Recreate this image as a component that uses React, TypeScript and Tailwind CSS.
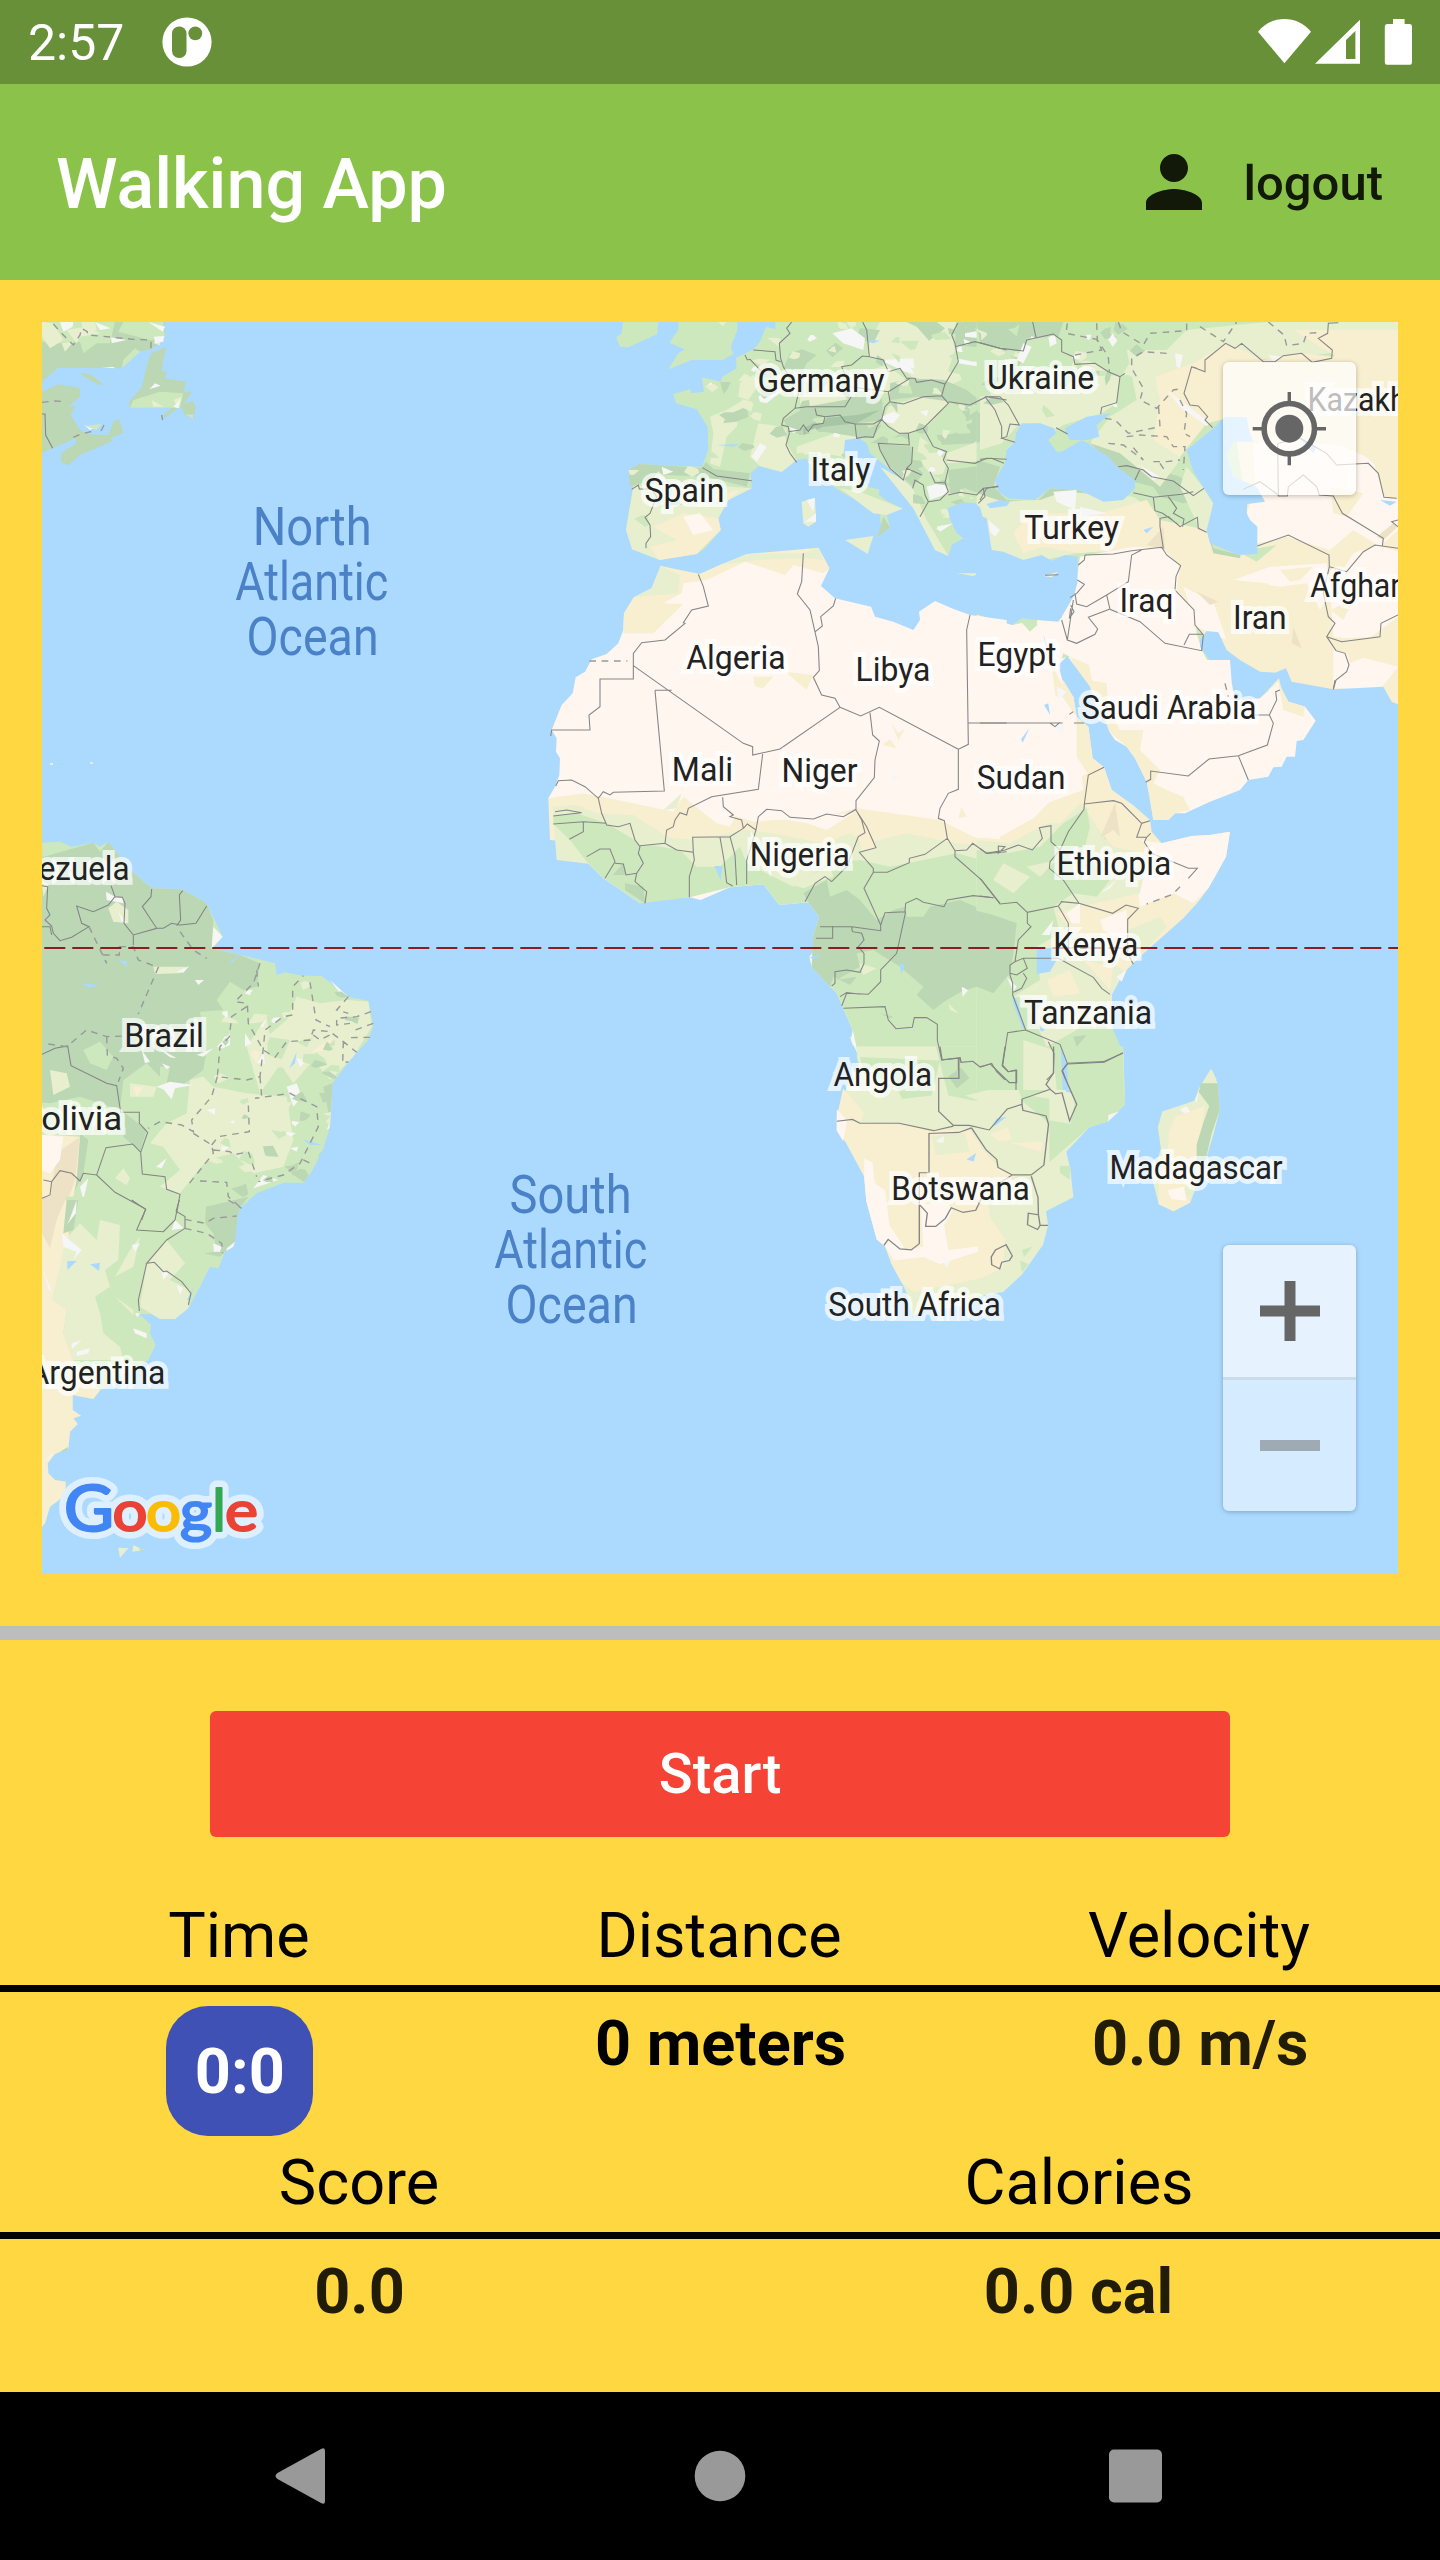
import React from "react";

type Shape = [fill: string, d: string];

const WATER = "#acdaff";
const GREEN = "#cee8bd";
const DARK = "#bbd7b4";
const LIME = "#e8efcf";
const SAND = "#f8eed0";
const DESERT = "#fff6ef";
const WHITE = "#f6f6f6";
const TAN = "#eee2c6";

/** Each tile of the map has its own drawing grid. */
const T = {
  nw: "translate(0 300) scale(.33333)",
  eu: "translate(540 300) scale(.33333)",
  me: "translate(980 300) scale(.33333)",
  wa: "translate(540 680) scale(.33333)",
  ea: "translate(980 680) scale(.33333)",
  br: "translate(0 820) scale(.33333)",
  ar: "translate(0 1200) scale(.33333)",
  sa: "translate(780 1050) scale(.42088 .35075)",
};

const EUROPE =
  "M708 0 706 88 678 80 660 125 640 148 600 168 588 175 590 205 545 232 543 245 486 232 492 275 455 280 450 268 400 282 408 310 470 328 503 380 505 450 486 500 395 498 300 492 298 510 265 510 280 560 258 690 276 695 276 748 325 745 358 780 410 762 470 762 495 745 542 690 535 655 565 600 635 565 632 520 655 498 725 517 770 480 800 475 820 520 860 545 910 580 965 608 1020 640 1022 670 1030 690 1012 712 1050 682 1040 645 1048 620 1088 626 1040 602 1017 585 1018 568 985 562 960 520 930 480 910 455 912 415 945 405 980 430 990 460 1040 500 1090 540 1118 565 1120 625 1160 680 1180 700 1185 750 1225 768 1235 735 1270 715 1250 700 1230 660 1222 625 1270 607 1315 610 1335 600 1380 600 1400 0Z";

const europe: Shape[] = [
  [GREEN, "M250 60 355 60 352 102 265 142 240 140 229 112 245 100ZM415 60 592 60 592 90 572 140 580 162 548 180 455 180 385 208 415 160 435 148 388 128 415 90Z"],
  [GREEN, EUROPE],
  [LIME, "M535 66 560 66 548 78ZM1020 66 1250 66 1235 100 1245 150 1215 240 1120 235 1095 210 1040 180 985 170 990 120ZM930 230 1040 195 1100 240 1050 280 930 270ZM1045 320 1140 290 1205 290 1225 310 1190 350 1150 390 1105 400 1080 400 1030 360ZM600 250 640 225 660 250 625 300 595 290ZM510 350 560 330 610 300 590 380 560 410 540 500 510 490 520 400ZM655 370 725 380 745 440 770 480 725 515 660 498 630 470ZM770 440 910 390 980 410 915 420 910 470 820 455 770 460ZM780 290 870 250 950 280 920 320 780 320ZM900 565 960 575 1088 626 1040 645 1000 640ZM1020 500 1090 540 1118 565 1160 660 1225 768 1185 750 1120 625ZM1220 460 1380 400 1390 480 1220 490ZM1140 410 1180 440 1220 490 1200 545 1170 520 1130 470Z"],
  [LIME, "M280 560 420 540 570 560 635 565 565 600 535 655 542 690 470 762 358 780 276 748 258 690Z"],
  [DARK, "M298 492 500 505 630 520 620 560 500 530 380 525 270 560 265 510ZM560 345 620 320 625 350 590 365 550 370ZM750 160 785 148 830 165 800 190 790 210 730 205ZM960 85 1020 90 1000 130 950 115ZM730 360 800 320 1025 280 1030 360 950 370 950 410 850 395 780 405 745 385ZM1050 250 1110 235 1215 240 1280 270 1330 310 1345 390 1300 430 1200 435 1190 405 1290 400 1300 340 1230 305 1130 290 1050 300ZM1250 66 1400 60 1400 150 1245 135ZM1010 430 1115 440 1115 490 1150 520 1120 560 1050 500ZM1225 510 1380 490 1370 560 1320 585 1230 580ZM945 372 1025 375 1000 410 950 415ZM1012 712 1030 650 1050 682ZM1100 66 1190 66 1215 85 1170 125 1130 80Z"],
  ["#a7c6a6", "M790 385 850 355 950 345 1020 330 950 370 850 380 790 405Z"],
  [WHITE, "M877 100 935 85 975 115 970 150 910 130ZM1020 180 1120 175 1125 222 1095 215 1040 190ZM655 290 690 262 730 270 680 310 660 305ZM1025 350 1060 335 1080 345 1060 370 1030 365ZM1275 100 1330 90 1320 115 1275 110ZM1250 175 1300 185 1340 180 1320 200 1255 190ZM745 380 775 390 760 400ZM365 500 400 515 370 525ZM450 670 480 665 475 712 460 710ZM1160 560 1210 545 1225 580 1170 600ZM1190 680 1240 670 1200 695ZM1140 335 1165 330 1160 350ZM660 430 680 440 650 485 635 470Z"],
  [SAND, "M340 680 430 640 535 655 542 690 470 762 358 780 330 740 410 720ZM560 580 600 570 560 605ZM1330 565 1380 560 1360 605 1330 590Z"],
  [DESERT, "M430 650 480 640 520 690 460 705Z"],
  [WATER, "M530 435 600 432 580 440ZM980 118 1020 122 1000 130Z"],
  [LIME, "M785 605 825 594 828 665 805 680 790 670ZM915 720 1000 708 983 762ZM1250 820 1320 820 1300 828Z"],
  [WHITE, "M800 600 825 594 820 635ZM795 665 828 640 828 665Z"],
];

const mideast: Shape[] = [
  [GREEN, "M-10 0H1254V1225H-10Z"],
  [DARK, "M-10 66 250 66 235 110 140 115 130 155 0 130ZM-10 330 25 370 10 420 -10 430ZM325 425 420 440 500 500 600 530 670 600 610 610 540 590 520 560 460 545ZM-10 480 60 500 40 560 80 600 170 605 210 565 300 570 370 605 430 598 480 575 360 630 100 625 -10 575ZM905 66 975 66 935 120ZM680 690 700 745 780 765 830 765 820 790 690 770Z"],
  [LIME, "M0 290 200 270 320 230 420 225 410 310 365 340 250 375 225 390 180 370 110 380 65 430 0 450ZM440 150 560 150 620 90 860 66 1254 66 1254 130 900 180 720 170 620 250 600 480 540 560 420 460 330 430 390 350 470 300ZM-10 580 70 605 180 600 250 575 460 590 530 640 440 760 310 755 180 782 130 780 35 750 -10 640ZM620 500 700 600 690 700 660 690 600 560Z"],
  [SAND, "M525 230 640 190 740 130 850 180 970 160 1060 170 1254 90 1254 1225 930 1225 660 1000 590 870 550 750 440 745 300 760 190 740 130 760 100 700 150 640 360 640 500 600 540 660 680 690 700 760 780 775 800 640 760 350 680 370 600 470 520 420 540 300Z"],
  [DESERT, "M825 570 820 430 930 420 1090 440 1180 480 1210 590 1254 600 1254 690 1200 740 1120 690 1050 750 920 710 832 730 800 640ZM870 800 1040 790 1050 880 1020 930 980 850 900 860 760 840ZM1050 870 1120 760 1190 735 1254 755 1254 950 1160 1020 1060 1010ZM300 770 460 740 550 745 600 800 590 870 645 930 650 1000 665 1050 720 1150 750 1225 300 1225 262 1070 245 950 285 880ZM1060 1050 1254 1100 1200 1170 1060 1165ZM610 860 700 905 740 1020 650 980Z"],
  [DESERT, "M-10 945 97 975 170 960 245 955 263 1025 325 1160 345 1225 -10 1225Z"],
  [SAND, "M690 760 760 800 700 880 600 840ZM270 1070 340 1100 400 1170 380 1225 330 1200ZM1050 560 1150 580 1100 650 1060 640ZM940 90 1254 90 1254 240 1130 240 1100 190ZM215 1095 250 1160 240 1225 225 1180ZM1105 420 1210 450 1254 520 1254 590 1210 590 1190 500Z"],
  [SAND, "M760 840 860 850 900 880 830 900ZM900 810 1000 800 960 840 930 845ZM740 920 760 980 720 960ZM1090 1015 1200 1010 1180 1060 1110 1090ZM1050 930 1120 900 1090 960Z"],
  [TAN, "M500 735 550 680 555 750ZM650 875 715 905 690 915ZM940 980 965 1045 935 1030ZM1190 710 1240 670 1254 680 1210 720Z"],
  [GREEN, "M118 960 170 952 172 975 150 995ZM250 1060 270 1070 245 1075ZM620 450 690 380 720 370 650 430ZM775 755 890 735 830 785Z"],
  [WHITE, "M205 110 225 105 230 130 210 140ZM585 160 608 165 600 205 590 200ZM560 270 600 300 690 370 680 378 600 320ZM220 575 290 570 285 630 230 605ZM385 120 398 100 412 122 398 140ZM25 660 60 690 45 710 30 695ZM130 130 155 140 130 190 110 180ZM865 165 910 170 880 185ZM80 450 105 425 100 450ZM300 620 380 640 300 650ZM480 495 540 530 520 540Z"],
  [WATER, "M45 540 75 490 80 450 105 425 108 400 125 370 180 370 222 385 228 400 205 420 230 455 245 455 305 420 325 430 345 445 385 470 415 505 465 540 465 565 430 600 370 605 300 570 210 565 165 600 85 595 55 575ZM255 385 320 350 392 340 350 375 358 410 320 420 270 420 262 405ZM20 612 60 600 90 605 80 618 30 625Z"],
  [WATER, "M700 385 620 450 640 515 700 610 680 690 690 730 775 765 832 762 832 680 810 660 800 640 802 612 855 605 830 560 760 530 740 465 760 425 820 425 810 400 800 352 735 350Z"],
  [WATER, "M-12 612 0 622 8 650 20 655 35 750 70 755 130 780 185 765 215 782 255 765 293 770 292 850 280 890 245 950 235 965 170 960 125 955 97 975 -12 942Z"],
  [WATER, "M235 1095 262 1068 330 1160 350 1225 270 1225ZM190 1005 215 1070 200 1050ZM490 690 520 680 500 700ZM1200 600 1250 605 1230 617ZM960 410 1010 440 1000 460 975 435Z"],
  [WATER, "M660 1020 680 993 715 997 740 1050 780 1080 840 1115 885 1118 918 1105 935 1145 1060 1168 1210 1160 1235 1205 1260 1215 1260 1260 1000 1260 975 1220 925 1205 905 1170 897 1135 840 1195 780 1225 765 1210 755 1150 740 1130 718 1150 718 1120 660 1040Z"],
  [SAND, "M190 828 235 815 215 832Z"],
];

const westAfrica: Shape[] = [
  [DESERT, "M362 -342 335 -275 282 -248 252 -200 250 -150 235 -110 200 -78 155 -62 135 -25 107 -8 98 40 65 75 35 150 50 175 48 215 60 235 58 285 45 320 25 355 38 380 40 432 75 452 90 480 135 510 140 545 190 595 300 670 380 650 450 652 482 660 570 622 670 613 718 675 805 667 838 710 820 765 820 815 808 830 815 860 890 940 938 1050 933 1080 955 1125 965 1230 1400 1230 1400 -180 1290 -195 1235 -215 1185 -237 1137 -205 1140 -180 1120 -150 1060 -175 1005 -190 993 -220 885 -245 843 -282 868 -335 835 -397 790 -380 625 -378 540 -345 480 -318 400 -322Z"],
  [SAND, "M362 -342 480 -318 620 -378 835 -397 868 -335 850 -320 760 -345 735 -315 615 -355 500 -300 430 -290 425 -260 370 -230 430 -228 340 -140 250 -140 252 -200 282 -248 340 -265Z"],
  [LIME, "M362 -342 420 -315 415 -260 282 -248 335 -275ZM540 -345 625 -378 790 -380 835 -397 850 -360 800 -365 650 -360Z"],
  [SAND, "M25 355 130 340 280 370 400 395 430 350 560 400 640 425 850 410 950 385 1200 420 1300 470 1400 480 1400 620 30 480ZM640 -10 700 -10 670 25 645 20ZM735 -25 820 -15 800 30ZM1055 130 1075 160 1095 145 1075 182ZM1028 195 1050 178 1070 205ZM1265 380 1280 410 1255 415Z"],
  [DESERT, "M430 350 560 350 590 400 570 440 530 430ZM690 410 940 400 860 450 800 430Z"],
  [LIME, "M38 380 110 375 170 400 280 405 380 470 460 480 620 450 700 460 850 490 930 460 980 490 1100 460 1250 490 1400 500 1400 700 50 540ZM370 390 425 340 410 385Z"],
  [GREEN, "M40 405 110 400 200 430 300 490 420 510 470 560 540 560 600 500 620 550 760 620 870 550 960 540 1050 560 1250 520 1400 560 1400 1230 965 1230 955 1125 938 1050 890 940 815 860 820 765 838 710 805 667 718 675 670 613 570 622 450 652 300 670 190 595 140 545 90 480 40 432Z"],
  [LIME, "M270 430 340 440 380 490 300 500ZM455 475 540 475 530 555 470 530ZM760 615 870 555 880 590 790 625ZM955 850 1010 865 970 885ZM1225 970 1255 1000 1230 990ZM950 1125 1000 1150 1180 1140 1220 1170 1200 1230 970 1230Z"],
  [SAND, "M955 470 1000 465 1010 505 965 510Z"],
  [DARK, "M790 640 860 600 870 650 920 630 960 660 1010 720 1060 690 1095 680 1100 710 1150 710 1170 680 1260 660 1330 690 1400 680 1400 940 1350 940 1310 910 1220 960 1180 990 1130 945 1150 920 1080 860 1000 810 950 820 960 860 890 900 950 890 930 915 880 890 870 920 815 860 820 765 838 710 805 667ZM218 585 250 550 260 585ZM255 610 310 620 315 670 255 630ZM1020 1000 1060 1010 1050 1015Z"],
  [WHITE, "M1075 555 1200 530 1110 548ZM1265 920 1285 930 1268 950ZM1050 290 1085 288 1060 300ZM930 1070 942 1075 940 1100Z"],
  [WATER, "M523 558 547 558 542 600ZM1085 740 1098 672 1092 715ZM1078 852 1095 852 1085 882ZM808 832 848 822 820 838Z"],
];

const eastAfrica: Shape[] = [
  [DESERT, "M60 50 280 50 290 110 325 140 338 235 372 262 395 330 465 380 400 450 60 470Z"],
  [SAND, "M60 470 110 425 160 415 205 370 300 290 372 262 395 330 465 380 510 420 515 455 545 490 635 468 690 465 750 455 738 530 685 625 655 665 610 715 485 825 430 880 395 945 397 1070 430 1120 432 1230 60 1230Z"],
  [DESERT, "M-10 50 280 50 285 105 300 240 310 330 200 370 160 415 60 470 -10 475ZM545 490 635 468 690 465 750 455 738 530 685 625 640 670 580 640 480 680 470 600 530 560 510 500 480 480Z"],
  [SAND, "M250 0 280 50 290 110 325 140 338 235 372 262 330 290 290 230 290 110 240 40Z"],
  [LIME, "M-10 480 90 490 200 430 240 430 300 370 350 400 400 470 500 540 480 640 300 680 230 700 320 800 430 870 395 945 397 1070 430 1120 -10 1230ZM370 780 540 710 560 740 460 850Z"],
  [GREEN, "M-10 510 80 520 180 500 250 430 320 385 330 440 310 520 390 600 350 650 280 640 220 680 240 760 170 800 180 900 100 950 180 960 250 1040 395 1040 430 1120 432 1230 -10 1230Z"],
  [LIME, "M70 550 150 590 100 640 40 600ZM150 990 250 980 290 1050 200 1100ZM130 1080 220 1110 230 1230 130 1230ZM140 560 230 540 180 590Z"],
  [DARK, "M-40 685 40 705 110 730 100 820 90 880 40 940 -10 920 -40 930ZM280 1070 320 1065 290 1100Z"],
  [TAN, "M405 370 420 470 370 480Z"],
  [SAND, "M320 390 400 380 480 440 490 520 400 500 350 440ZM200 900 270 870 300 940 220 950ZM310 840 400 860 390 930ZM250 690 440 690 440 820 330 820Z"],
  [TAN, "M405 370 420 470 400 450 360 475Z"],
  [DESERT, "M260 700 300 670 300 730 275 730ZM360 720 440 690 440 790 370 750Z"],
  [WHITE, "M360 640 410 600 390 625ZM185 765 220 720 210 765ZM230 20 260 35 235 60ZM225 140 255 130 245 170ZM80 890 110 920 100 935ZM410 890 440 870 425 905Z"],
  [DESERT, "M325 -60 750 -60 755 5 765 70 780 60 840 55 895 5 905 30 925 65 975 80 1007 122 970 180 950 183 945 230 920 230 905 260 880 262 865 290 805 300 780 330 690 365 615 400 585 400 565 420 520 420 510 350 500 305 465 235 440 200 405 180 388 155 385 130 345 60Z"],
  [SAND, "M385 80 420 150 490 150 480 210 540 270 520 310 560 330 610 350 630 390 585 400 565 420 520 420 500 305 465 235 440 200 388 155 330 0 380 10ZM895 5 925 65 975 80 970 110 910 90Z"],
  [WATER, "M170 808 240 800 230 840 210 875 170 882ZM95 940 110 960 135 1045 128 1045 100 970ZM242 1100 262 1150 265 1230 248 1230 245 1160ZM192 75 205 70 210 105ZM123 178 148 145 128 188ZM170 1035 195 1050 185 1055Z"],
  [LIME, "M695 1168 710 1200 680 1200Z"],
];

const southAfrica: Shape[] = [
  [LIME, "M180 -10 188 40 160 100 135 190 135 230 155 260 200 360 205 430 230 540 250 560 265 610 290 665 300 690 315 760 340 740 410 735 480 700 530 690 575 640 625 555 637 500 632 460 697 420 690 340 680 290 735 220 780 203 820 155 815 -10Z"],
  [GREEN, "M190 20 380 30 360 130 290 140 270 90 200 70ZM370 -10 815 -10 820 155 780 203 735 220 640 320 640 210 560 130 460 145 400 130ZM665 330 690 330 688 370 665 350ZM245 265 310 245 300 275 255 285ZM575 570 600 560 580 590ZM570 600 590 610 575 635Z"],
  [DARK, "M400 75 430 50 450 80 420 110Z"],
  [LIME, "M440 130 560 95 575 140 520 165ZM640 130 700 150 690 210 640 200ZM590 130 640 115 640 60 680 60 700 150Z"],
  [SAND, "M150 110 200 180 190 205 280 212 375 228 450 225 480 280 520 335 560 360 490 400 500 480 535 540 530 620 480 650 320 690 290 665 265 610 250 560 230 540 205 430 200 360 155 260 135 230 135 190ZM500 240 540 220 550 255 520 260ZM550 265 625 260 620 290Z"],
  [DESERT, "M200 310 220 320 225 380 250 400 260 500 300 570 340 560 335 440 400 440 410 460 390 500 400 570 470 560 470 575 380 610 340 590 270 600 250 560 230 540 205 430 200 360ZM135 170 160 200 150 260 135 230Z"],
  [LIME, "M360 245 440 235 450 290 370 300Z"],
  [WHITE, "M480 100 497 88 485 105ZM780 185 805 175 780 203ZM370 260 390 245 388 265ZM560 60 575 35 570 65ZM385 590 405 600 395 620Z"],
  [WATER, "M502 220 515 195 538 190 512 215ZM443 312 466 294 460 318ZM665 -10 680 40 692 122 680 120 668 60Z"],
  [LIME, "M1023 55 1040 95 1045 170 1030 240 1010 320 975 435 935 460 900 440 885 370 905 280 898 220 908 175 985 145 995 110Z"],
  [SAND, "M940 190 1010 160 1000 240 985 330 960 400 975 435 935 460 900 440 900 380 920 300 925 230Z"],
  [DARK, "M1000 95 1040 95 1045 170 1025 240 1010 320 990 320 990 270 1005 210 1020 160 995 120Z"],
  [DESERT, "M920 400 960 390 965 430 930 425Z"],
  [WHITE, "M985 145 995 120 990 148ZM950 170 965 160 975 175 960 180Z"],
];

const brazil: Shape[] = [
  [GREEN, "M60 72 180 65 215 80 280 68 300 80 325 65 390 150 455 205 545 208 620 250 668 350 640 385 720 405 825 430 830 465 855 457 905 467 965 468 1045 530 1105 543 1120 615 1105 660 1050 720 998 790 990 920 970 985 932 1060 910 1088 850 1088 770 1120 720 1165 700 1230 60 1230Z"],
  [DARK, "M60 130 280 68 300 95 325 65 390 150 455 205 545 208 620 250 640 300 635 385 720 405 780 430 770 500 730 510 690 485 650 540 670 570 600 575 620 690 610 750 540 800 500 790 440 730 370 780 360 870 240 830 150 850 60 840ZM375 880 440 930 420 995 370 950ZM240 940 265 960 250 1060 200 1160 230 1060ZM970 800 998 790 990 900ZM630 1180 700 1130 720 1165 700 1230 620 1230Z"],
  [GREEN, "M250 690 300 665 340 710 320 750 270 730ZM480 740 510 740 500 790 480 780ZM650 600 700 580 700 690 650 660Z"],
  [LIME, "M325 265 350 245 385 270 385 310 340 305ZM460 440 560 440 540 460 465 462ZM500 910 560 880 570 780 610 770 640 800 740 820 860 830 880 960 850 1040 760 1060 700 1000 620 1020 540 1120 480 1100 540 1050 490 980 450 970ZM890 530 960 550 1040 540 1105 545 1115 620 1060 710 990 780 940 720 880 790 840 730 870 660 800 650 860 600ZM150 750 200 760 210 800 160 825ZM345 1075 370 1045 390 1075 380 1095ZM390 790 470 800 460 830 390 830ZM740 680 800 590 810 650 790 700 850 720 780 820ZM125 180 145 195 130 230Z"],
  [SAND, "M60 940 240 950 230 1080 200 1230 60 1230ZM750 700 790 670 770 730ZM930 700 1000 650 980 690ZM400 800 430 800 410 830Z"],
  [TAN, "M170 1000 240 950 225 1080 190 1180 150 1140Z"],
  [DESERT, "M60 940 190 950 180 1020 150 1060 60 1030Z"],
  [WHITE, "M318 215 345 230 370 235 370 250 320 240ZM355 275 380 310 365 305ZM640 320 668 350 635 385ZM585 480 612 480 595 495ZM530 455 568 438 550 458ZM470 680 530 715 510 712ZM425 690 450 725 435 730ZM470 800 510 785 580 795 525 805 515 838 490 808ZM485 730 510 740 500 748ZM590 705 640 685 610 710ZM650 680 690 640 690 675 655 690ZM735 640 755 670 735 680ZM890 715 920 720 900 742ZM860 800 890 790 905 830 880 860ZM990 480 1045 530 1020 520ZM980 930 990 905 988 925ZM760 1105 790 1065 835 1080ZM870 985 895 980 890 995ZM468 1040 500 1015 485 1045ZM620 870 645 865 645 885ZM770 730 790 700 795 730ZM240 1100 265 1075 250 1140ZM780 620 800 595 790 620ZM690 905 705 900 700 912Z"],
  [WATER, "M355 420 382 425 380 440ZM243 490 295 495 270 503ZM685 430 725 400 700 425ZM868 745 890 695 885 730ZM908 958 965 975 930 975Z"],
];

const argentina: Shape[] = [
  [GREEN, "M60 -10 745 -10 715 30 705 60 705 125 675 155 655 205 630 200 600 260 565 325 525 357 480 357 455 342 418 342 453 375 450 400 467 435 445 480 410 500 303 570 280 597 218 585 218 630 243 647 220 655 233 672 210 695 205 745 165 762 143 790 145 820 165 840 197 845 197 885 150 920 135 970 126 980 60 980Z"],
  [SAND, "M60 -10 200 0 210 160 180 200 200 330 190 400 220 480 300 570 280 597 218 585 218 630 243 647 220 655 233 672 210 695 205 745 165 762 143 790 145 820 165 840 197 845 197 885 150 920 135 970 126 980 60 980Z"],
  [LIME, "M195 120 240 70 290 120 300 60 360 75 355 180 315 210 330 260 285 290 300 340 310 400 360 440 370 480 220 480 190 400 200 330 155 300 180 200ZM440 190 500 120 555 190 510 240 570 270 565 325 525 357 480 357 420 320ZM345 230 390 150 420 110 400 200ZM345 290 400 330 400 345Z"],
  [DARK, "M200 0 235 0 220 90 190 100ZM618 20 745 -10 715 30 705 125 675 155 660 170 612 160 650 155 640 100 615 70Z"],
  [TAN, "M126 -10 200 -10 170 60 150 145 126 100Z"],
  [WHITE, "M208 60 230 0 228 40 200 75ZM185 100 245 150 220 180 230 155 190 140ZM400 385 440 400 440 415 405 400ZM230 455 270 445 265 460 230 468ZM640 130 665 140 660 155 642 155ZM680 145 705 125 700 140 680 153ZM525 60 550 85 515 90ZM485 215 508 220 490 240ZM530 255 550 265 540 285ZM128 200 155 275 145 265ZM395 135 420 130 405 155ZM215 430 245 420 215 448ZM135 780 162 755 150 775ZM405 340 420 340 412 352Z"],
  [WATER, "M202 183 230 183 202 210ZM270 193 300 188 297 213ZM580 265 560 300 570 300Z"],
  [LIME, "M355 1043 385 1045 360 1073ZM400 1035 432 1050 397 1055Z"],
  [DARK, "M180 755 205 740 200 752ZM415 1040 433 1053 425 1055Z"],
];

const canada: Shape[] = [
  [DARK, "M60 0 495 0 495 115 455 148 410 155 365 205 175 203 126 245 60 260ZM126 275 175 253 240 265 240 290 205 320 228 318 212 345 240 390 270 403 325 405 340 365 357 357 370 398 330 415 340 422 240 465 205 496 183 487 183 460 228 430 228 415 126 458ZM237 220 270 222 313 255 290 253ZM455 160 498 140 485 210 502 218 492 235 558 245 550 275 575 275 553 310 578 303 588 320 580 355 555 345 540 318 495 355 490 345 515 323 390 323 387 305 425 262 445 180Z"],
  [GREEN, "M126 66 345 66 330 130 290 130 250 160 240 125 180 130 126 125ZM370 66 490 66 495 115 450 120 355 95ZM370 180 405 145 420 155 365 205ZM400 300 480 275 550 280 540 323 390 323Z"],
  [LIME, "M126 66 160 70 190 120 150 145 126 110ZM200 90 260 80 300 100 240 110 230 130ZM455 300 490 320 460 320ZM520 300 545 290 535 323ZM245 66 285 66 290 90 250 100ZM185 130 220 125 195 155ZM460 130 480 110 480 135Z"],
  [WHITE, "M180 66 220 66 218 80 190 95ZM285 66 332 85 300 90ZM333 112 380 120 335 130ZM445 66 495 80 488 95ZM462 110 492 108 490 125 465 130ZM448 268 465 250 482 257ZM520 320 542 297 535 325ZM252 375 280 385 270 390ZM305 201 345 201 340 205Z"],
  [GREEN, "M255 378 305 372 290 390ZM555 343 580 345 578 355Z"],
];

type Line = [transform: string, solid: string, dashed: string];

const borders: Line[] = [
  [T.eu,
    "M755 66 740 85 750 100 718 130 722 175 730 200 775 280 765 325 730 355 725 375 745 380 748 400 738 435 750 460 770 487M640 150 705 155 708 180 722 185M615 165 622 180 630 178 675 225M968 66 980 90 988 170 1030 180 1045 215 1080 205 1100 235 1125 235 1130 247 1175 240 1215 252 1255 185 1245 130 1235 105 1253 70M988 170 967 168 935 195 905 200 930 260 1045 275 1110 235M1045 275 1050 305 1090 312 1150 290 1205 287 1215 252M940 280 915 320 800 320 765 325M825 325 830 345 855 350 900 345 915 365 945 372 1000 372 1025 358 1035 320 1050 305M745 395 780 390 790 375 805 395 820 375 850 370 855 350M945 372 950 415 975 410 1000 412 1012 378 1025 358 1045 380 1078 400 1105 400 1150 385 1190 345 1225 310 1205 287M1225 305 1290 315 1340 290 1400 300M1105 400 1108 435 1015 430 1020 450 1050 505 1090 540 1100 505 1115 490 1118 440M1150 385 1180 440 1220 455 1210 480 1225 505 1215 548 1225 575 1200 600 1165 605 1140 650M1220 480 1305 490 1340 475 1400 478M1118 565 1125 540 1150 555 1155 585 1165 605M1100 505 1145 525M1170 515 1185 548 1215 548M1225 585 1260 577 1310 585 1330 565 1375 560M1330 565 1335 590 1315 610M1245 140 1305 125 1400 150M487 503 530 528 635 542M275 568 295 555 298 567 335 567 350 590 330 640 315 652 330 675 332 710 318 730 318 745",
    "M148 1083H262"],
  [T.me,
    "M0 128 60 145 130 153 140 120 220 102 245 120 245 155 280 170 285 193 345 190 385 215 420 230 410 308 365 322 362 342M158 66 168 112M25 290 60 290 85 315 118 375 90 372 80 410 65 415 105 427M15 290 45 330 65 380 65 415M0 478 35 475 72 490M228 383 263 402M0 600 20 565 55 558M420 230 435 220M698 383 675 360 683 350 655 318 630 315 612 280 635 200 675 215 675 180 737 130 765 145 785 130 850 185 885 185 910 167 965 160 997 187 1055 175 1057 150 1015 115 1043 100 1045 70 1075 68M635 200 650 205M415 500 440 497 490 510 515 530 580 543 640 587 672 565M465 540 480 508M460 578 520 592 605 583 640 575M520 592 525 632 548 640 590 670 600 680 652 652 655 685 680 697M565 590 590 625 580 640 612 657 608 680M600 680 565 650 540 655 540 680 550 745M315 765 400 762 455 752 545 742 560 765 602 797 588 830 585 870 642 930 645 975 670 1005 665 1052 555 1030 480 965 390 928 380 885 445 845 455 765 485 750M388 928 325 952 353 987 345 1003 290 1030 262 1020 245 960M380 885 320 920 290 912 285 880M262 1020 280 900M292 840 313 853 290 880 270 893M295 795 313 780 315 765M272 915 282 935 268 955 272 925M670 1003 628 1003 612 1035M832 738 925 705 1047 765 1048 800 1100 815 1150 755 1185 735 1254 745M1048 800 1030 880 1045 950 1065 970 1040 1010 1068 1052 1095 1060 1107 1095 1100 1115 1068 1140 1060 1168M1040 1010 1085 1025 1200 1010 1203 970 1254 945M893 430 895 588 922 588 925 560 970 525 1010 560 1018 585 1060 588 1087 640 1210 715 1207 738M895 430 960 415 1040 460 1070 495 1165 490 1195 520 1212 592 1250 595M790 568 840 545 895 585M1254 660 1235 665 1254 680M195 826 235 824",
    "M262 70 258 100 350 118 365 150 285 165M350 70 352 120 385 170 388 215M415 66 425 95 490 135 510 100 620 92 620 66M560 160 490 155 455 175 455 205 490 265 480 300 530 325 580 270 610 265M660 80 730 125 770 66M865 66 912 105 920 137 970 130 980 100 1010 98M375 355 405 360 445 400 540 380 535 310M440 410 480 405 560 410 580 440 615 440 610 510M600 300 620 340 612 400 630 410M385 430 430 435 490 480 450 430M520 485 560 485 600 480M540 490 560 520"],
  [T.wa,
    "M475 -317 490 -280 505 -222 455 -210 430 -172 435 -170 375 -120 305 -112 280 -80 280 -3 180 -3 180 80 147 105 150 150 35 150 32 168M280 -43 610 190 638 200 638 225 720 207 900 82 885 55 845 45 820 -8 838 -28 835 -100 810 -210 772 -258 785 -295 790 -380M826 -145 847 -162 842 -190 880 -222 887 -245M900 82 962 108 1018 82 1255 208M345 31H395M345 31 373 333 220 337 210 345 190 335 175 355 135 320 95 300 55 302 47 318M175 355 185 400 200 435 235 440 270 430 285 480 300 500 295 520 310 550 290 580 285 605 320 635 315 670M40 432 130 425 200 430M130 425V455L88 478M140 530 180 507 210 507 225 545 195 595M225 550 250 552 258 585 290 580M300 497 375 490 410 510 460 517 463 540 448 590V652M375 490 380 450 400 440 405 420 420 398 440 405 445 385 515 350 655 328 668 222M548 352 550 380 580 405 570 410 605 420 610 445 570 470 458 472 460 517M570 470 585 525 590 615M540 472 552 540 560 608 578 618M610 445 622 432 648 450 620 542V612M648 450 655 410 680 388 725 392 750 412 820 417 860 402 910 410 948 388 948 362 1003 293 1005 240 1018 183 998 165 990 98M948 390 980 440 1008 503 958 517 1000 565V577L972 625 1022 735V752L935 740H840M948 390 965 420 975 458 955 470 920 560 875 605 855 590 825 610 795 665M1000 577H1042L1108 548V535L1155 523 1222 475 1213 422 1195 415 1200 385 1225 340 1255 328V208L1285 193 1280 -150 1290 -195M1285 129H1400M1222 475 1245 512 1245 530 1325 600 1380 670M1245 512 1280 510 1298 490 1340 520 1400 515M1022 735 1035 698 1095 695 1097 670 1130 655 1150 667 1212 680 1222 660 1300 647 1360 653M1097 695 1070 820 1022 870 1022 905 985 943 920 940 905 978M878 738V775H828M935 740 937 755 965 760 972 780 955 800 972 820 972 850 960 877 920 870 885 875 885 910 875 918M900 950 920 938 955 942M910 985 1035 980 1045 1020 1068 1046 1117 1042 1123 1013 1160 1013 1192 1033 1192 1080 1205 1140 1255 1135V1170M45 395 80 390 125 398 90 402 40 408",
    ""],
  [T.ea,
    "M0 129H248M282 129H313M210 129 225 140 240 127M268 103 280 95M372 262 325 285 313 372 400 362 425 370 485 430 510 422M313 372 312 388 265 455 240 510 213 485V437L178 443 187 475 157 510 115 495 75 510 20 520 0 505M55 498V520L75 500ZM485 430 470 472H500L512 460M500 472 493 487 515 520 625 565H652L625 595M240 510 210 545 208 565 250 600 297 670 245 665 235 678 142 697 110 667 60 672 0 595M297 670 398 700 438 675 475 685 443 718V820L460 853M235 678 265 730V820M142 697V730L153 740 115 780 105 845 90 855 90 885 98 910 98 945 137 1050 240 1093 262 1150 370 1145 428 1120M105 845 130 835H235L340 892 365 925 390 943M130 835 142 865 110 885 90 880M130 880 140 895 125 925 100 937M137 1050 83 1058 68 1155 85 1175 108 1170V1230M205 1085 222 1120 220 1180 200 1200M262 1150 247 1170 258 1200M0 1162 35 1150 50 1175 75 1200M497 307 512 298V273L625 288 687 237 775 227 862 195 880 130 868 105 825 105M868 105 890 60 887 35 900 30M775 227 805 300M0 648 40 653M1065 0 1060 28",
    "M600 620 578 643 500 672M735 10 745 50"],
  [T.sa,
    "M380 -10 385 28 428 22 430 35 458 32 475 48 500 40 545 93H562V58L542 62 528 45 535 -10M425 22V81H377V175L412 215 450 215 497 228 540 168 575 155V140L642 112 632 98 650 65V-10M135 203 172 198 190 209H283L365 230 412 217M455 222 425 235 354 238V350H331V552L312 570 285 567 257 540 247 557M331 440 350 465 346 503H370L393 480 407 450 435 463 465 457 480 420M455 222 490 285 515 312 518 335 552 356H597L627 328 638 212 632 188 577 172 575 155M552 356 510 388M597 360 613 420 614 470 590 465 588 498 612 512 618 500H637M642 112 655 125 670 122 688 202 705 155 670 60 683 40 770 35 815 8M614 470 618 500M537 555 512 570 502 590 503 612 522 624 527 605 545 600 552 587Z",
    ""],
  [T.br,
    "M126 197 143 200 140 265 150 285 135 300 155 318 160 340 180 362 215 352 267 320 245 310 230 258 280 275 325 255 345 230 333 197M345 230 367 232 375 250 372 310 400 345 470 325 427 260 453 230 455 207M400 345V375M470 325 490 325 515 310 540 315 588 310 620 258M548 212 538 225 542 300 530 317M126 320 150 320 155 345M126 703 165 685 203 678 213 737 320 790 350 797 362 877H418V910L443 937 422 997 398 972 318 983 290 1065 250 1060 240 1083 215 1060 180 1052 155 1085 130 1080M155 1085 150 1125 126 1135M290 1065 345 1117 437 1167 425 1200M422 997 427 1062 495 1070 500 1108 540 1123 530 1180",
    "M267 320 320 430 310 405 358 405 358 380 400 380 415 420 475 442 415 582M540 335 580 390 620 415M145 672 200 680 260 630 320 650 375 648M320 650 322 705 350 715 370 745 355 785M780 430 760 490 705 545 742 550 745 610 790 690 825 712 860 665 930 660 940 630 990 635 1030 665 1070 697M740 560 695 590 688 650 660 680 652 770 740 780 780 770 790 685 795 630 850 590 878 585 878 500 910 467M930 487 948 600 990 620M940 645 960 660 1000 640M1045 530 1010 570 1045 580M1113 575 1070 590 1010 595 1010 615 1050 610M1120 610 1060 632M1110 652 1040 653M1030 665 1028 730 1045 725M652 770 635 830 575 900 580 935 545 915 480 905 445 925M580 940 635 975 640 1000 560 1100M635 975 655 950 748 935 745 855M640 990 690 995 700 1005 745 995 770 1070M780 770 785 830 765 835 870 820 950 860 955 920 930 970 900 1030 850 1065 775 1085M600 1083 680 1087 685 1130 725 1165M910 1020 940 1035M770 450 775 500"],
  [T.ar,
    "M395 0 437 28 410 90 490 95 525 60 530 35 555 50V85L500 120 440 190 463 187 490 215 500 213 545 245 573 280 565 315M440 190 415 300 418 333M538 0 528 35",
    "M555 58 615 70 640 55 710 48M555 85 620 100 665 130 668 160M685 0 725 25"],
  [T.nw,
    "M126 342H135L137 405 158 445",
    "M126 307 165 303 200 305M160 72 185 100 220 135 240 105 245 85 262 95 262 105 300 108 400 118 453 120V150M220 412 240 403 280 393M312 375 303 393M485 345 488 360"],
];

const labels: [string, number, number, number][] = [
  ["Germany", 759, 391.7, 124], ["Spain", 646, 502, 77], ["Italy", 812, 481, 57],
  ["Algeria", 687.7, 668.7, 96.3], ["Libya", 857, 681, 72], ["Ukraine", 988.5, 389, 104.3],
  ["Turkey", 1025.7, 539, 92], ["Kazakhstan", 1309, 411, 155], ["Afghanistan", 1311.7, 596.7, 160],
  ["Iraq", 1121, 611.7, 51], ["Iran", 1234.5, 629, 50.7], ["Egypt", 979, 666, 76],
  ["Saudi Arabia", 1082.7, 719, 172.3], ["Mali", 673.3, 781, 58.3], ["Niger", 783, 782, 73],
  ["Nigeria", 751.3, 866, 97], ["Sudan", 978.3, 789, 85.7], ["Ethiopia", 1058, 874.3, 111.7],
  ["Kenya", 1054.7, 956, 82.3], ["Tanzania", 1025.5, 1024, 125], ["Angola", 835, 1085.4, 95.6],
  ["Botswana", 892.8, 1199.4, 135.5], ["Madagascar", 1111, 1178.4, 170],
  ["South Africa", 829.7, 1315.2, 169.6], ["Brazil", 125.7, 1046.3, 76.7],
  ["Venezuela", -13, 879.3, 141], ["Bolivia", 21, 1130, 99.7], ["Argentina", 30, 1383.3, 134],
];

const oceans: [string, number, number, number][] = [
  ["North", 252.7, 545, 119], ["Atlantic", 235.3, 600, 153], ["Ocean", 246.6, 655, 132],
  ["South", 509.6, 1213, 122], ["Atlantic", 494.3, 1268, 153], ["Ocean", 505.6, 1323, 132],
];

const logo: [string, string, number, number, number][] = [
  ["G", "#4285f4", 64, 64, 50], ["o", "#ea4335", 112.5, 57, 35], ["o", "#fbbc05", 146, 57, 35],
  ["g", "#4285f4", 180, 57, 32], ["l", "#34a853", 212.5, 58, 13], ["e", "#ea4335", 225, 57, 33],
];

function Tile({ at, shapes }: { at: string; shapes: Shape[] }) {
  return (
    <g transform={at}>
      {shapes.map(([fill, d], i) => <path key={i} fill={fill} d={d} />)}
    </g>
  );
}

/** Small terrain flecks, placed by a fixed-seed generator. */
function flecks(seed: number, n: number, x0: number, y0: number, w: number, h: number) {
  let s = seed;
  const rnd = () => ((s = (s * 16807) % 2147483647) / 2147483647);
  const colours = [LIME, DARK, LIME, GREEN, WHITE, DARK, GREEN];
  return Array.from({ length: n }, (_, i) => {
    const cx = x0 + rnd() * w;
    const cy = y0 + rnd() * h;
    const pts = [0, 1, 2, 3, 4].map((k) => {
      const a = (k / 5) * 6.283 + rnd();
      const r = 6 + rnd() * (i % 7 === 4 ? 12 : 30);
      return `${(cx + Math.cos(a) * r).toFixed(0)},${(cy + Math.sin(a) * r * 0.7).toFixed(0)}`;
    });
    return <polygon key={i} points={pts.join(" ")} fill={colours[i % 7]} />;
  });
}

function WorldMap() {
  return (
    <svg viewBox="42 322 1356 1251.4" className="block h-full w-full" preserveAspectRatio="none">
      <defs>
        <clipPath id="europe"><path d={EUROPE} /></clipPath>
        <clipPath id="brazil"><path d={brazil[0][1]} /></clipPath>
      </defs>
      <rect x="42" y="322" width="1356" height="1252" fill={WATER} />
      <Tile at={T.nw} shapes={canada} />
      <Tile at={T.eu} shapes={europe} />
      <g transform={T.eu} clipPath="url(#europe)">{flecks(77, 90, 500, 70, 800, 420)}{flecks(5, 18, 270, 500, 260, 200)}{flecks(9, 16, 1100, 480, 220, 220)}</g>
      <Tile at={T.me} shapes={mideast.slice(0, 3)} />
      <g transform={T.me}>{flecks(31, 40, 10, 80, 480, 260)}</g>
      <Tile at={T.me} shapes={mideast.slice(3)} />
      <Tile at={T.wa} shapes={westAfrica} />
      <Tile at={T.sa} shapes={southAfrica} />
      <Tile at={T.ea} shapes={eastAfrica} />
      <Tile at={T.br} shapes={brazil} />
      <g transform={T.br} clipPath="url(#brazil)">{flecks(13, 55, 650, 480, 430, 640)}</g>
      <Tile at={T.ar} shapes={argentina} />
      <path fill={LIME} d="M50 763h3v2h-3zM90 762h3v2h-3z" />
      <g fill="none" stroke="#858585">
        {borders.map(([at, solid, dashed], i) => (
          <g key={i} transform={at}>
            <path d={solid} strokeWidth="3.2" />
            <path d={dashed} strokeWidth="4.2" strokeDasharray="20 17" stroke="#999" />
          </g>
        ))}
      </g>
      <path d="M44.3 948H1400" stroke="#8c1c1f" strokeWidth="2.2" strokeDasharray="21 7" fill="none" />
      <g fontFamily="Roboto, sans-serif">
        <g fontSize="53" fill="#4b82c7">
          {oceans.map(([t, x, y, w], i) => (
            <text key={i} x={x} y={y} textLength={w} lengthAdjust="spacingAndGlyphs">{t}</text>
          ))}
        </g>
        <g fontSize="34" fill="#222" stroke="#fff" strokeOpacity=".7" strokeWidth="10" paintOrder="stroke">
          {labels.map(([t, x, y, w]) => (
            <text key={t} x={x - 1.5} y={y + 0.4} textLength={w + 3} lengthAdjust="spacingAndGlyphs">{t}</text>
          ))}
        </g>
      </g>
      <g fontFamily="Lato, sans-serif" fontWeight="400" strokeLinejoin="round">
        {[true, false].map((halo) => (
          <g key={String(halo)} strokeWidth={halo ? 15 : 2.2}>
            {logo.map(([t, fill, x, size, w], i) => (
              <text key={i} x={x} y="1531" fontSize={size} fill={halo ? "#def0ff" : fill} stroke={halo ? "#def0ff" : fill} textLength={w} lengthAdjust="spacingAndGlyphs">{t}</text>
            ))}
          </g>
        ))}
      </g>
    </svg>
  );
}

function MapControls() {
  return (
    <>
      <button className="absolute right-[42px] top-10 h-[133px] w-[133px] rounded-md bg-white/70 shadow-[0_1px_5px_rgba(0,0,0,0.25)]">
        <svg viewBox="0 0 133 133" className="h-full w-full" fill="none" stroke="#666">
          <circle cx="66.3" cy="66.7" r="25.2" strokeWidth="5.6" />
          <circle cx="66.3" cy="66.7" r="14" fill="#666" stroke="none" />
          <path d="M66.3 30v10M66.3 93v10.3M29.7 66.7h10M93 66.7h10" strokeWidth="3.4" />
        </svg>
      </button>
      <div className="absolute bottom-[62px] right-[42px] flex h-[266px] w-[133px] flex-col overflow-hidden rounded-md shadow-[0_1px_5px_rgba(0,0,0,0.25)]">
        <button className="flex h-[135px] items-center justify-center border-b-[3px] border-[#c9dcee] bg-[#e6f3ff]">
          <svg viewBox="0 0 60 60" className="h-[60px] w-[60px]" fill="#666"><path d="M0 24.5h24.5V0h11v24.5H60v11H35.5V60h-11V35.5H0z" /></svg>
        </button>
        <button className="flex h-[131px] items-center justify-center bg-[#d5ebff]">
          <span className="h-[11px] w-[60px] bg-[#9eabb5]" />
        </button>
      </div>
    </>
  );
}

function StatusBar() {
  return (
    <div className="flex h-[84px] items-center justify-between bg-[#689038] pl-7 pr-[28px] text-white">
      <div className="flex items-center">
        <span className="w-[134px] pt-[3px] text-[50px] leading-[81px]">2:57</span>
        <svg viewBox="0 0 50 50" className="h-[50px] w-[50px]">
          <circle cx="25" cy="25" r="24.6" fill="#fff" />
          <rect x="10" y="9.5" width="14.5" height="31.5" rx="7" fill="#689038" />
          <circle cx="33.3" cy="16.3" r="6.9" fill="#689038" />
        </svg>
      </div>
      <svg viewBox="1258 18 154 48" className="h-12 w-[154px]" fill="#fff">
        <path d="M1284.4 63.3 1258 31.7C1265 23.5 1274 19 1284.4 19S1304 23.5 1311 31.7Z" />
        <path fillRule="evenodd" d="M1315 63.7 1360 19.7V63.7ZM1346 40V59H1355.4V31Z" />
        <path d="M1387 24H1393V19H1404.6V24H1410Q1412 24 1412 26.500V62.200Q1412 64.700 1410 64.700H1387Q1384.800 64.700 1384.800 62.200V26.500Q1384.800 24 1387 24Z" />
      </svg>
    </div>
  );
}

function NavBar() {
  return (
    <div className="flex h-[168px] items-center bg-black">
      <svg viewBox="0 0 1440 168" className="h-[168px] w-[1440px]" fill="#999">
        <path d="M321 57Q325 54.500 325 59.500V108.500Q325 113.500 321 111L277.500 87Q273.500 84 277.500 81Z" />
        <circle cx="720" cy="84" r="25.3" />
        <rect x="1109" y="57.500" width="53" height="53" rx="5" />
      </svg>
    </div>
  );
}

function Heading({ children }: { children: React.ReactNode }) {
  return <div className="flex-1 pr-0.5 text-center text-[63px]">{children}</div>;
}

function Value({ children, soft }: { children: React.ReactNode; soft?: boolean }) {
  return (
    <div className={"flex-1 text-center text-[63px] font-bold leading-[75px] " + (soft ? "text-black/87" : "text-black")}>
      {children}
    </div>
  );
}

export default function App() {
  return (
    <div className="flex h-[2560px] w-[1440px] flex-col overflow-hidden bg-[#ffd740] font-['Roboto',sans-serif] text-black">
      <StatusBar />
      <header className="flex h-[196px] items-center justify-between bg-[#8bc34a] pl-14 pr-[57px]">
        <h1 className="pt-1 text-[70px] font-medium leading-[82px] text-white">Walking App</h1>
        <div className="flex items-center gap-[28px] text-black/87">
          <svg viewBox="0 0 24 24" className="h-[84px] w-[84px]" fill="currentColor">
            <path d="M12 12c2.210 0 4-1.790 4-4s-1.790-4-4-4-4 1.790-4 4 1.790 4 4 4zm0 2c-2.670 0-8 1.340-8 4v2h16v-2c0-2.660-5.330-4-8-4z" />
          </svg>
          <span className="pt-[3px] text-[49px] font-medium leading-[58px]">logout</span>
        </div>
      </header>

      <main className="flex flex-1 flex-col">
        <section className="relative mx-[42px] mt-[42px] h-[1251.4px] overflow-hidden">
          <WorldMap />
          <MapControls />
        </section>
        <div className="mt-[52.3px] h-[14px] bg-[#bdbdbd]" />
        <button className="mx-auto mt-[71px] h-[126.3px] w-[1020px] rounded-[6px] bg-[#f54336] text-[56px] font-medium text-white">Start</button>

        <div className="mt-[50px] flex h-[98px] items-center"><Heading>Time</Heading><Heading>Distance</Heading><Heading>Velocity</Heading></div>
        <div className="h-[7px] bg-black" />
        <div className="mt-[14px] flex h-[130px] items-start">
          <div className="flex flex-1 justify-center pr-px">
            <span className="flex h-[130px] w-[147px] items-center justify-center rounded-[42px] bg-[#3f51b5] pt-0.5 text-[63px] font-bold text-white">0:0</span>
          </div>
          <Value>0 meters</Value>
          <Value soft>0.0 m/s</Value>
        </div>

        <div className="mb-[2.5px] flex h-[94px] items-center"><Heading>Score</Heading><Heading>Calories</Heading></div>
        <div className="h-[7px] bg-black" />
        <div className="mt-[15px] flex pr-0.5"><Value soft>0.0</Value><Value soft>0.0 cal</Value></div>
      </main>
      <NavBar />
    </div>
  );
}
